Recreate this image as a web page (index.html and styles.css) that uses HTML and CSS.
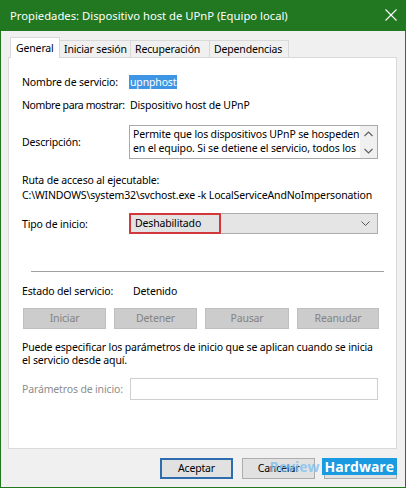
FILE: index.html
```html
<!DOCTYPE html>
<html lang="es">
<head>
<meta charset="utf-8">
<link rel="stylesheet" href="styles.css">
</head>
<body>
<div class="window">
  <div class="titlebar">
    <span class="title">Propiedades: Dispositivo host de UPnP (Equipo local)</span>
    <svg class="close" width="12" height="12" viewBox="0 0 12 12"><path d="M0.5 0.5 L11.5 11.5 M11.5 0.5 L0.5 11.5" stroke="#fff" stroke-width="1.1" fill="none"/></svg>
  </div>
  <div class="content">
    <div class="tabs">
      <div class="tab active">General</div>
      <div class="tab">Iniciar sesión</div>
      <div class="tab">Recuperación</div>
      <div class="tab">Dependencias</div>
    </div>
    <div class="panel">
      <div class="row r1"><span class="lbl">Nombre de servicio:</span><span class="sel">upnphost</span></div>
      <div class="row r2"><span class="lbl tight">Nombre para mostrar:</span><span class="val">Dispositivo host de UPnP</span></div>
      <div class="row r3"><span class="lbl">Descripción:</span>
        <div class="desc">
          <div class="desc-text">Permite que los dispositivos UPnP se hospeden<br>en el equipo. Si se detiene el servicio, todos los</div>
          <div class="scroll">
            <svg width="9" height="6" viewBox="0 0 9 6"><path d="M0.5 5 L4.5 1 L8.5 5" stroke="#606060" stroke-width="1.2" fill="none"/></svg>
            <svg width="9" height="6" viewBox="0 0 9 6"><path d="M0.5 1 L4.5 5 L8.5 1" stroke="#606060" stroke-width="1.2" fill="none"/></svg>
          </div>
        </div>
      </div>
      <div class="line r4">Ruta de acceso al ejecutable:</div>
      <div class="line">C:\WINDOWS\system32\svchost.exe -k LocalServiceAndNoImpersonation</div>
      <div class="row r5"><span class="lbl">Tipo de inicio:</span>
        <div class="combo">
          <span class="combo-val">Deshabilitado</span>
          <svg class="chev" width="9" height="5" viewBox="0 0 9 5"><path d="M0.5 0.5 L4.5 4.5 L8.5 0.5" stroke="#555" stroke-width="1" fill="none"/></svg>
        </div>
      </div>
      <div class="sep"></div>
      <div class="row r6"><span class="lbl">Estado del servicio:</span><span class="val val2">Detenido</span></div>
      <div class="btns">
        <div class="dbtn">Iniciar</div>
        <div class="dbtn">Detener</div>
        <div class="dbtn">Pausar</div>
        <div class="dbtn">Reanudar</div>
      </div>
      <div class="para">Puede especificar los parámetros de inicio que se aplican cuando se inicia<br>el servicio desde aquí.</div>
      <div class="row r7"><span class="lbl gray">Parámetros de inicio:</span><div class="input"></div></div>
    </div>
    <div class="footer">
      <div class="btn primary">Aceptar</div>
      <div class="btn">Cancelar</div>
      <div class="btn">Aplicar</div>
      <div class="watermark"><span class="wm1">Review</span><span class="wm2">Hardware</span></div>
    </div>
  </div>
</div>
</body>
</html>
```
FILE: styles.css
```css
* { box-sizing: border-box; }
html, body { margin: 0; padding: 0; }
body {
  width: 406px;
  height: 488px;
  font-family: "Noto Sans", "Open Sans", sans-serif;
  font-size: 10.5px;
  letter-spacing: -0.15px;
  color: #000;
  background: #f0f0f0;
  white-space: nowrap;
}
.window {
  width: 406px;
  height: 488px;
  border: 1px solid #217821;
  border-top: 0;
  display: flex;
  flex-direction: column;
  background: #f0f0f0;
}
.titlebar {
  height: 31px;
  margin: 0 -1px;
  background: #217821;
  display: flex;
  align-items: center;
  padding: 0 9px 1px 10px;
  justify-content: space-between;
}
.title { color: #fff; font-size: 11.25px; letter-spacing: 0; }
.content {
  flex: 1;
  padding: 6px 8px 0 7px;
  display: flex;
  flex-direction: column;
  position: relative;
}
.tabs {
  display: flex;
  height: 20px;
  padding-left: 2px;
  position: relative;
  z-index: 1;
}
.tab {
  height: 17px;
  margin-top: 3px;
  border: 1px solid #d9d9d9;
  border-bottom: 0;
  border-left: 0;
  background: #f0f0f0;
  padding: 0 4px;
  line-height: 16px;
}
.tab.active {
  height: 21px;
  margin-top: 0;
  background: #fff;
  border-left: 1px solid #d9d9d9;
  padding: 2px 5px 0 5px;
  width: 50px;
}
.tab:nth-child(2) { width: 71px; }
.tab:nth-child(3) { width: 79px; }
.tab:nth-child(4) { width: 79px; }
.panel {
  height: 392px;
  background: #fff;
  border: 1px solid #d9d9d9;
  padding: 17px 0 0 13px;
  display: flex;
  flex-direction: column;
}
.row { display: flex; align-items: center; line-height: 14px; }
.lbl { width: 108px; flex: none; }
.lbl.tight { letter-spacing: -0.4px; }
.lbl.gray { color: #8d8d8d; }
.r1 { height: 14px; }
.sel {
  background: #3e95e4;
  color: #fff;
  padding: 0 1px;
  margin-left: -1px;
}
.r2 { margin-top: 9px; }
.r3 { margin-top: 13px; }
.desc {
  width: 249px;
  height: 34px;
  margin-left: -1px;
  border: 1px solid #a9a9a9;
  display: flex;
}
.desc-text {
  flex: 1;
  padding: 1px 0 0 3px;
  line-height: 14px;
  overflow: hidden;
}
.scroll {
  width: 17px;
  background: #f0f0f0;
  display: flex;
  flex-direction: column;
  align-items: center;
  justify-content: space-between;
  padding: 5px 0 4px;
}
.line { line-height: 14px; }
.r4 { margin-top: 14px; margin-bottom: 1px; }
.r5 { margin-top: 11px; }
.combo {
  width: 249px;
  height: 21px;
  margin-left: -1px;
  border: 1px solid #adadad;
  background: #e5e5e5;
  display: flex;
  align-items: center;
  justify-content: space-between;
  padding-right: 7px;
}
.combo-val {
  height: 21px;
  width: 92px;
  margin: -1px 0 -1px -1px;
  border: 2px solid #d2373a;
  border-radius: 1px;
  padding-left: 4px;
  line-height: 17px;
  background: #e3e3e3;
}
.sep {
  margin-top: 37px;
  height: 1px;
  width: 353px;
  margin-left: 9px;
  background: #a0a0a0;
}
.r6 { margin-top: 12px; }
.val2 { padding-left: 3px; }
.btns {
  margin-top: 10px;
  display: flex;
  gap: 8px;
  width: 356px;
  margin-left: 1px;
}
.dbtn {
  height: 21px;
  width: 83px;
  background: #cccccc;
  border: 1px solid #bfbfbf;
  color: #838383;
  text-align: center;
  line-height: 19px;
}
.dbtn:nth-child(3) { width: 84px; }
.dbtn:nth-child(4) { width: 82px; }
.para {
  margin-top: 12px;
  line-height: 13px;
  width: 362px;
}
.r7 { margin-top: 11px; }
.input {
  width: 248px;
  height: 22px;
  border: 1px solid #cfcfcf;
  background: #fff;
}
.footer {
  margin-top: 9px;
  display: flex;
  justify-content: flex-end;
  gap: 9px;
  position: relative;
}
.btn {
  width: 73px;
  height: 21px;
  background: #e1e1e1;
  border: 1px solid #adadad;
  text-align: center;
  line-height: 19px;
}
.btn.primary {
  border: 2px solid #2e6cb0;
  line-height: 17px;
}
.watermark {
  position: absolute;
  right: 0;
  top: 0;
  display: flex;
  align-items: center;
  font-family: "Open Sans", "Noto Sans", sans-serif;
  font-weight: 700;
  font-size: 14px;
  letter-spacing: 0;
  height: 17px;
}
.wm1 { color: rgba(120, 190, 240, 0.75); margin-right: 2px; }
.wm2 {
  background: #1a9ae0;
  color: #fff;
  padding: 0 3px;
  line-height: 17px;
}
```
